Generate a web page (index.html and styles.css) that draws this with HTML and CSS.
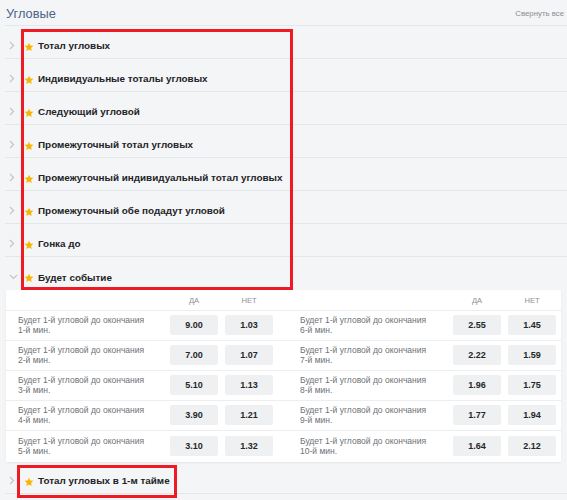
FILE: index.html
```html
<!DOCTYPE html>
<html lang="ru">
<head>
<meta charset="utf-8">
<link rel="stylesheet" href="styles.css">
</head>
<body>
<div class="page">
  <div class="top">
    <h1 class="title">Угловые</h1>
    <span class="collapse">Свернуть все</span>
  </div>

  <div class="list">
    <div class="mrow"><span class="chev"><svg width="6" height="9" viewBox="0 0 6 9"><path d="M1 1l3.5 3.5L1 8" fill="none" stroke="#c3c5c8" stroke-width="1.2"/></svg></span><span class="star"><svg width="10" height="10" viewBox="0 0 24 24"><path d="M12 1.5l3.1 6.9 7.4.7-5.6 5 1.7 7.4L12 17.7l-6.6 3.8 1.7-7.4-5.6-5 7.4-.7z" fill="#f7b500"/></svg></span><span class="mname">Тотал угловых</span></div>
    <div class="mrow"><span class="chev"><svg width="6" height="9" viewBox="0 0 6 9"><path d="M1 1l3.5 3.5L1 8" fill="none" stroke="#c3c5c8" stroke-width="1.2"/></svg></span><span class="star"><svg width="10" height="10" viewBox="0 0 24 24"><path d="M12 1.5l3.1 6.9 7.4.7-5.6 5 1.7 7.4L12 17.7l-6.6 3.8 1.7-7.4-5.6-5 7.4-.7z" fill="#f7b500"/></svg></span><span class="mname">Индивидуальные тоталы угловых</span></div>
    <div class="mrow"><span class="chev"><svg width="6" height="9" viewBox="0 0 6 9"><path d="M1 1l3.5 3.5L1 8" fill="none" stroke="#c3c5c8" stroke-width="1.2"/></svg></span><span class="star"><svg width="10" height="10" viewBox="0 0 24 24"><path d="M12 1.5l3.1 6.9 7.4.7-5.6 5 1.7 7.4L12 17.7l-6.6 3.8 1.7-7.4-5.6-5 7.4-.7z" fill="#f7b500"/></svg></span><span class="mname">Следующий угловой</span></div>
    <div class="mrow"><span class="chev"><svg width="6" height="9" viewBox="0 0 6 9"><path d="M1 1l3.5 3.5L1 8" fill="none" stroke="#c3c5c8" stroke-width="1.2"/></svg></span><span class="star"><svg width="10" height="10" viewBox="0 0 24 24"><path d="M12 1.5l3.1 6.9 7.4.7-5.6 5 1.7 7.4L12 17.7l-6.6 3.8 1.7-7.4-5.6-5 7.4-.7z" fill="#f7b500"/></svg></span><span class="mname">Промежуточный тотал угловых</span></div>
    <div class="mrow"><span class="chev"><svg width="6" height="9" viewBox="0 0 6 9"><path d="M1 1l3.5 3.5L1 8" fill="none" stroke="#c3c5c8" stroke-width="1.2"/></svg></span><span class="star"><svg width="10" height="10" viewBox="0 0 24 24"><path d="M12 1.5l3.1 6.9 7.4.7-5.6 5 1.7 7.4L12 17.7l-6.6 3.8 1.7-7.4-5.6-5 7.4-.7z" fill="#f7b500"/></svg></span><span class="mname">Промежуточный индивидуальный тотал угловых</span></div>
    <div class="mrow"><span class="chev"><svg width="6" height="9" viewBox="0 0 6 9"><path d="M1 1l3.5 3.5L1 8" fill="none" stroke="#c3c5c8" stroke-width="1.2"/></svg></span><span class="star"><svg width="10" height="10" viewBox="0 0 24 24"><path d="M12 1.5l3.1 6.9 7.4.7-5.6 5 1.7 7.4L12 17.7l-6.6 3.8 1.7-7.4-5.6-5 7.4-.7z" fill="#f7b500"/></svg></span><span class="mname">Промежуточный обе подадут угловой</span></div>
    <div class="mrow"><span class="chev"><svg width="6" height="9" viewBox="0 0 6 9"><path d="M1 1l3.5 3.5L1 8" fill="none" stroke="#c3c5c8" stroke-width="1.2"/></svg></span><span class="star"><svg width="10" height="10" viewBox="0 0 24 24"><path d="M12 1.5l3.1 6.9 7.4.7-5.6 5 1.7 7.4L12 17.7l-6.6 3.8 1.7-7.4-5.6-5 7.4-.7z" fill="#f7b500"/></svg></span><span class="mname">Гонка до</span></div>
    <div class="mrow open"><span class="chev"><svg width="9" height="6" viewBox="0 0 9 6"><path d="M1 1l3.5 3.5L8 1" fill="none" stroke="#c3c5c8" stroke-width="1.2"/></svg></span><span class="star"><svg width="10" height="10" viewBox="0 0 24 24"><path d="M12 1.5l3.1 6.9 7.4.7-5.6 5 1.7 7.4L12 17.7l-6.6 3.8 1.7-7.4-5.6-5 7.4-.7z" fill="#f7b500"/></svg></span><span class="mname">Будет событие</span></div>

    <div class="panel">
      <div class="orow head">
        <span></span><span class="hd">ДА</span><span class="hd">НЕТ</span><span></span>
        <span></span><span class="hd">ДА</span><span class="hd">НЕТ</span>
      </div>
      <div class="orow">
        <span class="lbl">Будет 1-й угловой до окончания<br>1-й мин.</span><span class="odd">9.00</span><span class="odd">1.03</span><span></span>
        <span class="lbl">Будет 1-й угловой до окончания<br>6-й мин.</span><span class="odd">2.55</span><span class="odd">1.45</span>
      </div>
      <div class="orow">
        <span class="lbl">Будет 1-й угловой до окончания<br>2-й мин.</span><span class="odd">7.00</span><span class="odd">1.07</span><span></span>
        <span class="lbl">Будет 1-й угловой до окончания<br>7-й мин.</span><span class="odd">2.22</span><span class="odd">1.59</span>
      </div>
      <div class="orow">
        <span class="lbl">Будет 1-й угловой до окончания<br>3-й мин.</span><span class="odd">5.10</span><span class="odd">1.13</span><span></span>
        <span class="lbl">Будет 1-й угловой до окончания<br>8-й мин.</span><span class="odd">1.96</span><span class="odd">1.75</span>
      </div>
      <div class="orow">
        <span class="lbl">Будет 1-й угловой до окончания<br>4-й мин.</span><span class="odd">3.90</span><span class="odd">1.21</span><span></span>
        <span class="lbl">Будет 1-й угловой до окончания<br>9-й мин.</span><span class="odd">1.77</span><span class="odd">1.94</span>
      </div>
      <div class="orow">
        <span class="lbl">Будет 1-й угловой до окончания<br>5-й мин.</span><span class="odd">3.10</span><span class="odd">1.32</span><span></span>
        <span class="lbl">Будет 1-й угловой до окончания<br>10-й мин.</span><span class="odd">1.64</span><span class="odd">2.12</span>
      </div>
    </div>

    <div class="mrow last"><span class="chev"><svg width="6" height="9" viewBox="0 0 6 9"><path d="M1 1l3.5 3.5L1 8" fill="none" stroke="#c3c5c8" stroke-width="1.2"/></svg></span><span class="star"><svg width="10" height="10" viewBox="0 0 24 24"><path d="M12 1.5l3.1 6.9 7.4.7-5.6 5 1.7 7.4L12 17.7l-6.6 3.8 1.7-7.4-5.6-5 7.4-.7z" fill="#f7b500"/></svg></span><span class="mname">Тотал угловых в 1-м тайме</span></div>
  </div>

  <div class="mark mark-a"></div>
  <div class="mark mark-b"></div>
</div>
</body>
</html>
```

FILE: styles.css
```css
* { box-sizing: border-box; }
html, body { margin: 0; padding: 0; }
body {
  background: #f4f5f7;
  font-family: "Liberation Sans", Arial, sans-serif;
  width: 567px;
  height: 500px;
  overflow: hidden;
}
.page { position: relative; width: 567px; height: 500px; }

.top {
  height: 26px;
  display: flex;
  align-items: center;
  justify-content: space-between;
  padding: 2px 3px 0 1px;
  margin-left: 5px;
  border-bottom: 1px solid #e4e6e9;
}
.title {
  margin: 0;
  font-size: 12.8px;
  font-weight: normal;
  color: #4a6586;
}
.collapse {
  font-size: 7.8px;
  color: #8a8d91;
}

.list { margin-left: 5px; }

.mrow {
  height: 33px;
  padding-top: 7px;
  display: flex;
  align-items: center;
  border-bottom: 1px solid #e4e6e9;
}
.mrow.open { border-bottom: none; }
.mrow.last { height: 32px; padding-top: 6px; }
.chev {
  width: 19px;
  padding-left: 4px;
  display: flex;
  align-items: center;
}
.star {
  width: 14px;
  display: flex;
  align-items: center;
  padding-top: 2px;
}
.mname {
  font-size: 9.9px;
  font-weight: bold;
  color: #222326;
}

.panel {
  background: #fff;
  margin: 0 6px 0 1px;
  box-shadow: 0 1px 2px rgba(0,0,0,0.06);
}
.orow {
  display: grid;
  grid-template-columns: 145px 48px 48px 13px 146px 48px 48px;
  column-gap: 7px;
  align-items: center;
  padding-left: 12px;
  height: 30px;
  border-bottom: 1px solid #eceef0;
}
.orow:last-child { border-bottom: none; height: 31px; }
.orow.head { height: 21px; }
.hd {
  text-align: center;
  font-size: 7.6px;
  color: #8c8f93;
  padding-top: 1px;
}
.lbl {
  font-size: 8.5px;
  line-height: 9.5px;
  color: #6e7175;
  white-space: nowrap;
}
.odd {
  height: 20px;
  margin-top: -2px;
  display: flex;
  align-items: center;
  justify-content: center;
  background: #eff0f2;
  border-radius: 2px;
  font-size: 9px;
  font-weight: bold;
  color: #25272a;
}

.mark {
  position: absolute;
  border: 3px solid #ee1b24;
  pointer-events: none;
}
.mark-a { left: 21px; top: 29px; width: 272px; height: 261px; }
.mark-b { left: 17px; top: 465px; width: 160px; height: 33px; }
```
